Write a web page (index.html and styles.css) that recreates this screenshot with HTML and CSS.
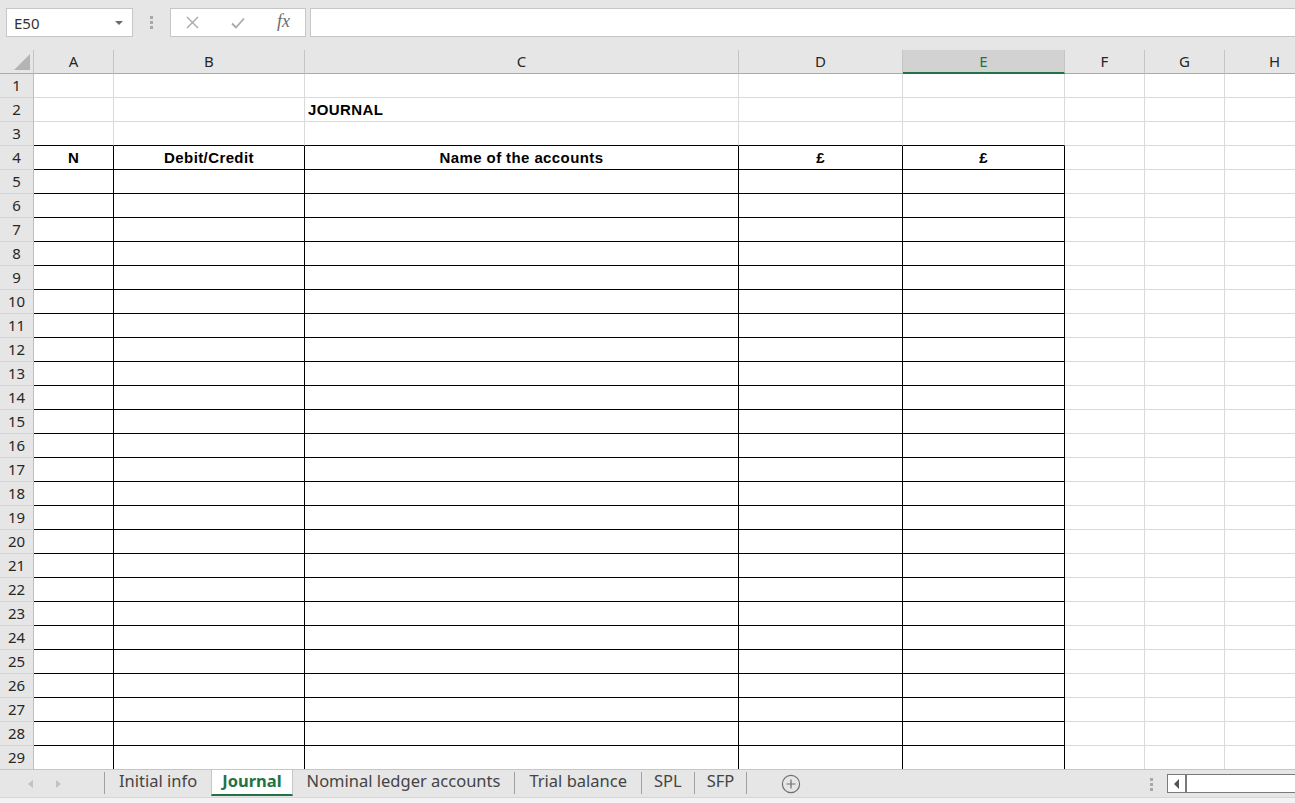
FILE: index.html
```html
<!DOCTYPE html>
<html lang="en">
<head>
    <meta charset="UTF-8">
    <title>Journal</title>
    <link rel="stylesheet" href="styles.css">
</head>
<body>
<!-- 名称框 + 编辑栏 -->
<div class="topbar">
    <div class="namebox">E50<span class="drop"></span></div>
    <div class="grip"><i></i><i></i><i></i></div>
    <div class="fx-btns">
        <svg width="13" height="13" viewBox="0 0 13 13"><path d="M1 1L12 12M12 1L1 12" stroke="#a9a9a9" stroke-width="1.4" fill="none"/></svg>
        <svg width="14" height="12" viewBox="0 0 14 12"><path d="M1 6.5L5 10.5L13 1.5" stroke="#a9a9a9" stroke-width="1.8" fill="none"/></svg>
        <span class="fx">fx</span>
    </div>
    <div class="formula"></div>
</div>

<!-- 表格区域 -->
<div class="sheet">
    <div class="row head">
        <div class="corner"><svg width="16" height="16" viewBox="0 0 16 16"><polygon points="16,0 16,16 0,16" fill="#b4b4b4"/></svg></div>
        <div>A</div><div>B</div><div>C</div><div>D</div><div class="sel">E</div><div>F</div><div>G</div><div>H</div>
    </div>
    <div class="row"><div class="rh">1</div><div></div><div></div><div></div><div></div><div></div><div></div><div></div><div></div></div>
    <div class="row"><div class="rh">2</div><div></div><div></div><div class="txt">JOURNAL</div><div></div><div></div><div></div><div></div><div></div></div>
    <div class="row above"><div class="rh">3</div><div></div><div></div><div></div><div></div><div></div><div></div><div></div><div></div></div>
    <div class="row boxed"><div class="rh">4</div><div class="ctr">N</div><div class="ctr">Debit/Credit</div><div class="ctr">Name of the accounts</div><div class="ctr">£</div><div class="ctr">£</div><div></div><div></div><div></div></div>
    <div class="row boxed"><div class="rh">5</div><div></div><div></div><div></div><div></div><div></div><div></div><div></div><div></div></div>
    <div class="row boxed"><div class="rh">6</div><div></div><div></div><div></div><div></div><div></div><div></div><div></div><div></div></div>
    <div class="row boxed"><div class="rh">7</div><div></div><div></div><div></div><div></div><div></div><div></div><div></div><div></div></div>
    <div class="row boxed"><div class="rh">8</div><div></div><div></div><div></div><div></div><div></div><div></div><div></div><div></div></div>
    <div class="row boxed"><div class="rh">9</div><div></div><div></div><div></div><div></div><div></div><div></div><div></div><div></div></div>
    <div class="row boxed"><div class="rh">10</div><div></div><div></div><div></div><div></div><div></div><div></div><div></div><div></div></div>
    <div class="row boxed"><div class="rh">11</div><div></div><div></div><div></div><div></div><div></div><div></div><div></div><div></div></div>
    <div class="row boxed"><div class="rh">12</div><div></div><div></div><div></div><div></div><div></div><div></div><div></div><div></div></div>
    <div class="row boxed"><div class="rh">13</div><div></div><div></div><div></div><div></div><div></div><div></div><div></div><div></div></div>
    <div class="row boxed"><div class="rh">14</div><div></div><div></div><div></div><div></div><div></div><div></div><div></div><div></div></div>
    <div class="row boxed"><div class="rh">15</div><div></div><div></div><div></div><div></div><div></div><div></div><div></div><div></div></div>
    <div class="row boxed"><div class="rh">16</div><div></div><div></div><div></div><div></div><div></div><div></div><div></div><div></div></div>
    <div class="row boxed"><div class="rh">17</div><div></div><div></div><div></div><div></div><div></div><div></div><div></div><div></div></div>
    <div class="row boxed"><div class="rh">18</div><div></div><div></div><div></div><div></div><div></div><div></div><div></div><div></div></div>
    <div class="row boxed"><div class="rh">19</div><div></div><div></div><div></div><div></div><div></div><div></div><div></div><div></div></div>
    <div class="row boxed"><div class="rh">20</div><div></div><div></div><div></div><div></div><div></div><div></div><div></div><div></div></div>
    <div class="row boxed"><div class="rh">21</div><div></div><div></div><div></div><div></div><div></div><div></div><div></div><div></div></div>
    <div class="row boxed"><div class="rh">22</div><div></div><div></div><div></div><div></div><div></div><div></div><div></div><div></div></div>
    <div class="row boxed"><div class="rh">23</div><div></div><div></div><div></div><div></div><div></div><div></div><div></div><div></div></div>
    <div class="row boxed"><div class="rh">24</div><div></div><div></div><div></div><div></div><div></div><div></div><div></div><div></div></div>
    <div class="row boxed"><div class="rh">25</div><div></div><div></div><div></div><div></div><div></div><div></div><div></div><div></div></div>
    <div class="row boxed"><div class="rh">26</div><div></div><div></div><div></div><div></div><div></div><div></div><div></div><div></div></div>
    <div class="row boxed"><div class="rh">27</div><div></div><div></div><div></div><div></div><div></div><div></div><div></div><div></div></div>
    <div class="row boxed"><div class="rh">28</div><div></div><div></div><div></div><div></div><div></div><div></div><div></div><div></div></div>
    <div class="row boxed"><div class="rh">29</div><div></div><div></div><div></div><div></div><div></div><div></div><div></div><div></div></div>
</div>

<!-- 工作表标签 -->
<div class="tabbar">
    <div class="nav"><span class="arr l"></span><span class="arr r"></span></div>
    <span class="sep"></span>
    <div class="tab">Initial info</div>
    <div class="tab active">Journal</div>
    <div class="tab">Nominal ledger accounts</div>
    <span class="sep"></span>
    <div class="tab">Trial balance</div>
    <span class="sep"></span>
    <div class="tab short">SPL</div>
    <span class="sep"></span>
    <div class="tab short">SFP</div>
    <span class="sep"></span>
    <div class="add">
        <svg width="20" height="20" viewBox="0 0 20 20"><circle cx="10" cy="10" r="8.6" stroke="#6f6f6f" stroke-width="1.2" fill="none"/><path d="M10 5.5V14.5M5.5 10H14.5" stroke="#6f6f6f" stroke-width="1.2"/></svg>
    </div>
    <div class="right">
        <div class="hgrip"><i></i><i></i><i></i></div>
        <div class="hscroll">
            <div class="btn"><span class="tri"></span></div>
        </div>
    </div>
</div>
<div class="status"></div>
</body>
</html>
```

FILE: styles.css
```css
*{
    margin: 0;
    padding: 0;
    box-sizing: border-box;
}
body{
    width: 1295px;
    height: 803px;
    overflow: hidden;
    background: #fff;
    font-family: "Noto Sans", "Open Sans", sans-serif;
    color: #262626;
}
/* 编辑栏 */
.topbar{
    height: 50px;
    background: #e6e6e6;
    display: flex;
    align-items: flex-start;
    padding: 8px 0 0 6px;
}
.namebox{
    width: 127px;
    height: 29px;
    background: #fff;
    border: 1px solid #c6c6c6;
    display: flex;
    align-items: center;
    justify-content: space-between;
    padding: 0 9px 0 7px;
    font-size: 15px;
    color: #333;
}
.drop{
    width: 0;
    height: 0;
    border-left: 4px solid transparent;
    border-right: 4px solid transparent;
    border-top: 4px solid #6a6a6a;
}
.grip{
    width: 37px;
    height: 29px;
    display: flex;
    flex-direction: column;
    align-items: center;
    justify-content: center;
    gap: 2px;
}
.grip i, .hgrip i{
    display: block;
    width: 3px;
    height: 3px;
    background: #a8a8a8;
}
.fx-btns{
    width: 136px;
    height: 29px;
    background: #fff;
    border: 1px solid #c6c6c6;
    display: flex;
    align-items: center;
    padding-left: 15px;
    gap: 32px;
}
.fx{
    font-family: "Liberation Serif", serif;
    font-style: italic;
    font-size: 18px;
    color: #6b6b6b;
    margin-top: -2px;
}
.formula{
    flex: 1;
    height: 29px;
    margin-left: 4px;
    background: #fff;
    border: 1px solid #c6c6c6;
    border-right: none;
}
/* 单元格 */
.sheet{
    height: 719px;
    overflow: hidden;
}
.row{
    display: grid;
    grid-template-columns: 34px 80px 191px 434px 164px 162px 80px 80px 100px;
    height: 24px;
}
.row>div{
    border-right: 1px solid #dadada;
    border-bottom: 1px solid #dadada;
    padding-top: 1px;
    line-height: 22px;
    font-family: "Liberation Sans", Arial, sans-serif;
    font-size: 15px;
    font-weight: bold;
    letter-spacing: 0.4px;
    color: #000;
    white-space: nowrap;
    overflow: hidden;
}
.row .txt{
    padding-left: 3px;
}
.row .ctr{
    text-align: center;
}
.row>.rh{
    background: #e6e6e6;
    border-right-color: #bdbdbd;
    border-bottom-color: #d4d4d4;
    text-align: center;
    padding-top: 0;
    line-height: 23px;
    font-family: "Noto Sans", "Open Sans", sans-serif;
    font-weight: normal;
    letter-spacing: 0;
    color: #262626;
}
.above>div:nth-child(n+2):nth-child(-n+6){
    border-bottom-color: #000;
}
.boxed>div:nth-child(n+2):nth-child(-n+6){
    border-right-color: #000;
    border-bottom-color: #000;
}
.head>div{
    background: #e6e6e6;
    border-right-color: #c4c4c4;
    border-bottom-color: #ababab;
    text-align: center;
    padding-top: 0;
    line-height: 23px;
    font-family: "Noto Sans", "Open Sans", sans-serif;
    font-weight: normal;
    letter-spacing: 0;
    color: #262626;
}
.head>.corner{
    display: flex;
    align-items: flex-end;
    justify-content: flex-end;
    padding: 0 3px 3px 0;
}
.head>.sel{
    background: #d2d2d2;
    color: #217346;
    border-bottom: 2px solid #217346;
    line-height: 22px;
}
/* 标签栏 */
.tabbar{
    height: 28px;
    background: #e6e6e6;
    border-top: 1px solid #c6c6c6;
    display: flex;
    align-items: flex-start;
    font-size: 16.5px;
    color: #444;
}
.nav{
    width: 104px;
    height: 27px;
    display: flex;
    align-items: center;
    padding-left: 28px;
    gap: 23px;
}
.arr{
    width: 0;
    height: 0;
    border-top: 4px solid transparent;
    border-bottom: 4px solid transparent;
}
.arr.l{
    border-right: 5px solid #c2c2c2;
}
.arr.r{
    border-left: 5px solid #c2c2c2;
}
.sep{
    width: 1px;
    height: 22px;
    margin-top: 2px;
    background: #a0a0a0;
}
.tab{
    height: 26px;
    line-height: 22px;
    padding: 0 14px;
    white-space: nowrap;
}
.tab.short{
    padding: 0 12px;
}
.tab.active{
    background: #fff;
    color: #217346;
    font-weight: bold;
    padding: 0 10px;
    border-left: 1px solid #c6c6c6;
    border-right: 1px solid #c6c6c6;
    border-bottom: 2px solid #217346;
}
.add{
    margin: 4px 0 0 34px;
    height: 20px;
}
.right{
    margin-left: auto;
    display: flex;
    align-items: flex-start;
}
.hgrip{
    display: flex;
    flex-direction: column;
    gap: 2px;
    margin: 8px 14px 0 0;
}
.hscroll{
    width: 128px;
    height: 19px;
    margin-top: 4px;
    border: 1px solid #7a7a7a;
    border-right: none;
    background: #fff;
    display: flex;
}
.hscroll .btn{
    width: 19px;
    border-right: 2px solid #7a7a7a;
    display: flex;
    align-items: center;
    justify-content: center;
}
.tri{
    width: 0;
    height: 0;
    border-top: 5px solid transparent;
    border-bottom: 5px solid transparent;
    border-right: 5px solid #555;
}
.status{
    height: 6px;
    background: #f3f3f3;
    border-top: 1px solid #d6d6d6;
}
```
